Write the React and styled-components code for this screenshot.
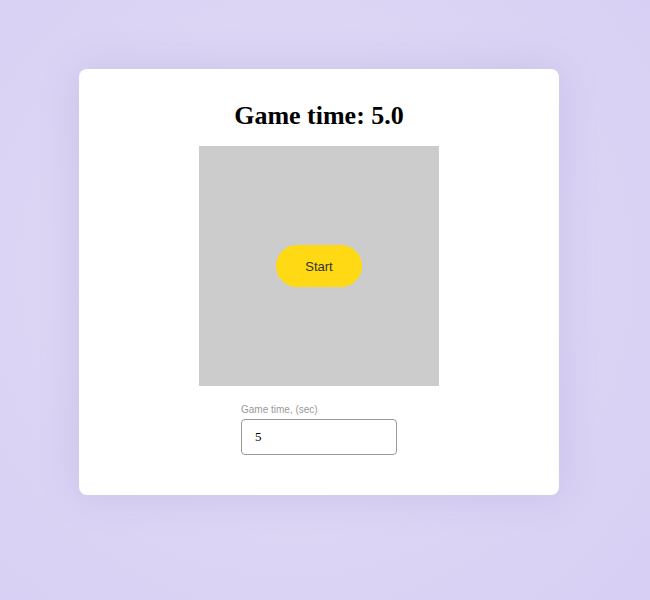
import React, { useState } from 'react';
import styled, { createGlobalStyle } from 'styled-components';

const GlobalStyle = createGlobalStyle`
  html, body {
    margin: 0;
    min-height: 100%;
  }
  body {
    min-height: 600px;
    background: radial-gradient(circle at 45% 45%, #e3def4 0%, #ddd6f4 45%, #d7cff4 100%);
    font-family: "Liberation Serif", serif;
  }
`;

const Page = styled.div`
  padding: 69px 0 0 79px;
`;

const Card = styled.div`
  width: 480px;
  box-sizing: border-box;
  padding: 32px 0 40px;
  background: #fff;
  border-radius: 8px;
  box-shadow: 0 0 40px rgba(120, 100, 190, 0.18);
  display: flex;
  flex-direction: column;
  align-items: center;
`;

const Title = styled.h2`
  margin: 0 0 15px;
  font-family: "Liberation Serif", serif;
  font-size: 26px;
  font-weight: bold;
  color: #000;
`;

const Field = styled.div`
  width: 240px;
  height: 240px;
  background: #cccccc;
  display: flex;
  align-items: center;
  justify-content: center;
`;

const StartButton = styled.button`
  width: 86px;
  height: 42px;
  border: none;
  border-radius: 21px;
  background: #ffd914;
  color: #333;
  font-family: "Liberation Sans", Arial, sans-serif;
  font-size: 13px;
  cursor: pointer;
`;

const Settings = styled.label`
  margin-top: 18px;
  display: flex;
  flex-direction: column;
  gap: 4px;
`;

const Caption = styled.span`
  font-family: "Liberation Sans", Arial, sans-serif;
  font-size: 10px;
  color: #999;
`;

const TimeInput = styled.input`
  width: 156px;
  height: 36px;
  box-sizing: border-box;
  padding: 0 13px;
  border: 1px solid #999;
  border-radius: 4px;
  font-family: "Liberation Serif", "Times New Roman", serif;
  font-size: 13px;
  color: #000;
  background: #fff;
  outline: none;
`;

export default function App() {
  const [time, setTime] = useState('5');

  return (
    <>
      <GlobalStyle />
      <Page>
        <Card>
          <Title>Game time: {Number(time || 0).toFixed(1)}</Title>
          <Field>
            <StartButton>Start</StartButton>
          </Field>
          <Settings>
            <Caption>Game time, (sec)</Caption>
            <TimeInput value={time} onChange={(e) => setTime(e.target.value)} />
          </Settings>
        </Card>
      </Page>
    </>
  );
}
